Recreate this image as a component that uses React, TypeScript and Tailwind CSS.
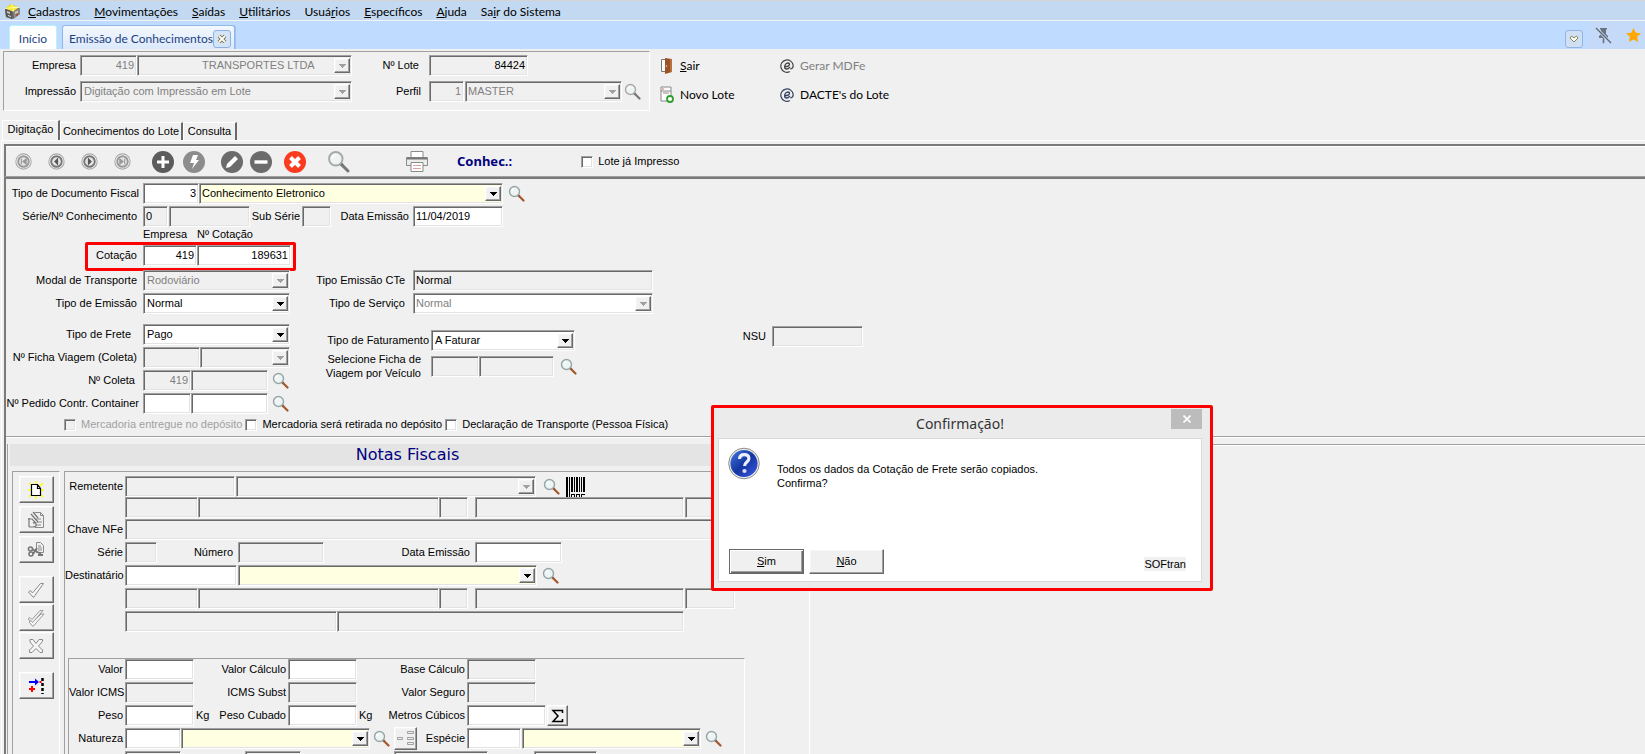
import type { ReactNode } from "react";
import clsx from "clsx";

const sunken =
  "border border-t-[#a0a0a0] border-l-[#a0a0a0] border-r-white border-b-white shadow-[inset_1px_1px_0_#696969,inset_-1px_-1px_0_#e3e3e3]";
const raised =
  "border border-t-white border-l-white border-r-[#696969] border-b-[#696969] shadow-[inset_-1px_-1px_0_#a0a0a0,inset_1px_1px_0_#f6f6f6] bg-[#f0f0f0]";
const groove = "border border-t-[#a0a0a0] border-l-[#a0a0a0] border-r-white border-b-white";

interface FieldProps {
  name: string;
  label?: string;
  value?: string;
  className: string;
  white?: boolean;
  right?: boolean;
  muted?: boolean;
}

function Field({ name, label, value = "", className, white, right, muted }: FieldProps) {
  return (
    <input
      id={name}
      name={name}
      aria-label={label}
      defaultValue={value}
      readOnly={!white}
      className={clsx(
        "h-[21px] shrink-0 px-[2px] pb-[2px] outline-none",
        sunken,
        white ? "bg-white" : "bg-[#f0f0f0]",
        right && "text-right",
        muted ? "text-[#808080]" : "text-black",
        className,
      )}
    />
  );
}

interface ComboProps {
  name: string;
  label?: string;
  value?: string;
  className: string;
  bg?: string;
  disabled?: boolean;
  indent?: string;
}

function Combo({
  name,
  label,
  value = "",
  className,
  bg = "bg-white",
  disabled,
  indent = "pl-1",
}: ComboProps) {
  return (
    <div className={clsx("flex h-[21px] shrink-0 p-[2px] pr-[1px]", sunken, bg, className)}>
      <select
        id={name}
        name={name}
        aria-label={label}
        disabled={disabled}
        className={clsx(
          "min-w-0 flex-1 appearance-none bg-transparent pb-px leading-none opacity-100 outline-none",
          indent,
          disabled ? "text-[#808080]" : "text-black",
        )}
      >
        <option>{value}</option>
      </select>
      <span className={clsx("flex w-4 items-center justify-center", raised)}>
        <svg width="7" height="4" viewBox="0 0 7 4" shapeRendering="crispEdges">
          <path d="M0 0h7v1H0zM1 1h5v1H1zM2 2h3v1H2zM3 3h1v1H3z" fill={disabled ? "#a0a0a0" : "#000"} />
        </svg>
      </span>
    </div>
  );
}

function Label({ to, className, children }: { to: string; className?: string; children: ReactNode }) {
  return (
    <label htmlFor={to} className={clsx("shrink-0 whitespace-nowrap text-right", className)}>
      {children}
    </label>
  );
}

function Check({ name, disabled, className, children }: { name: string; disabled?: boolean; className?: string; children: ReactNode }) {
  return (
    <label className={clsx("flex items-center gap-[5px] whitespace-nowrap", disabled && "text-[#a0a0a0]", className)}>
      <input
        type="checkbox"
        name={name}
        disabled={disabled}
        className={clsx("size-3 appearance-none", sunken, disabled ? "bg-[#f0f0f0]" : "bg-white")}
      />
      {children}
    </label>
  );
}

function Lens({ gray, size = 17 }: { gray?: boolean; size?: number }) {
  return (
    <svg width={size} height={size} viewBox="0 0 17 17" fill="none">
      <path d="M10 10l1.500 1.500" stroke="#444" strokeWidth="2.200" />
      <path d="M11 11l4.500 4.500" stroke={gray ? "#777" : "#a4562c"} strokeWidth="2.200" strokeLinecap="round" />
      <circle cx="6.500" cy="6.500" r="5" fill="#eef4f4" stroke={gray ? "#a8a8a8" : "#94a6a6"} strokeWidth="1.400" />
      <path d="M3.800 6.200a3 3 0 0 1 2.400-2.500" stroke="#fff" strokeWidth="1.200" />
    </svg>
  );
}

function SearchButton({ label, gray, className }: { label: string; gray?: boolean; className?: string }) {
  return (
    <button type="button" aria-label={label} className={clsx("shrink-0", className)}>
      <Lens gray={gray} />
    </button>
  );
}

const menus = [
  ["", "C", "adastros"],
  ["", "M", "ovimentações"],
  ["", "S", "aídas"],
  ["", "U", "tilitários"],
  ["Usuá", "r", "ios"],
  ["", "E", "specíficos"],
  ["", "A", "juda"],
  ["Sa", "i", "r do Sistema"],
];

function MenuBar() {
  return (
    <nav className="flex h-[21px] items-center border-t border-b border-t-[#d4d4d4] border-b-[#f4f4f4] bg-[#c3d9f1] pt-px pl-1 font-[Lato] text-[12px]">
      <svg width="17" height="17" viewBox="0 0 17 17">
        <path d="M7 1l8 4 1 6-7 5-7-2-1-8z" fill="#6a6664" />
        <path d="M1 5.500l7 3v7.500l-6-2z" fill="#5a5856" />
        <path d="M9 8.500l7-3.500v6l-6 4.500z" fill="#8d8682" />
        <path d="M7 1l8 3.500-6 4-8-3z" fill="#f5e92a" />
        <path d="M7 1l3 3.500-1 4M1 5.500l9-1 5 0" stroke="#fffbc0" strokeWidth=".8" fill="none" />
        <path d="M3 8l3 1v2l-3-1z" fill="#c9c4c0" />
        <path d="M4 12l3 1v1l-3-1z" fill="#ece8e4" />
        <path d="M11 9l3-1.500v2L11 11z" fill="#d8c9c0" />
        <path d="M12 11.500l2-1v1.500l-2 1z" fill="#a8402c" />
      </svg>
      <div className="ml-[7px] flex gap-[14px]">
        {menus.map(([before, key, after]) => (
          <button key={before + key + after} type="button" className="whitespace-nowrap">
            {before}
            <span className="underline">{key}</span>
            {after}
          </button>
        ))}
      </div>
    </nav>
  );
}

function WindowTabs() {
  return (
    <div className="flex h-7 items-end bg-[#bfdbff] font-[Lato] text-[12px] text-[#1f3f80]">
      <button type="button" className="ml-[9px] h-6 w-12 rounded-t-[3px] border border-b-0 border-[#b8f2fb] bg-white pt-[2px]">
        Início
      </button>
      <div className="ml-[5px] flex h-6 w-[173px] items-center justify-between rounded-t-[3px] border border-b-0 border-[#8db8e8] bg-linear-to-b from-[#f4f8ff] to-[#dbe9fb] pt-[2px] pr-[3px] pl-[6px] shadow-[1px_0_0_#9fc4ee]">
        <button type="button" className="whitespace-nowrap">Emissão de Conhecimentos</button>
        <button
          type="button"
          aria-label="Fechar aba"
          className="flex size-[18px] shrink-0 items-center justify-center rounded-[3px] border border-[#8fb0e0] bg-[#d3e3f8]"
        >
          <svg width="10" height="10" viewBox="0 0 10 10">
            <path d="M2 2l6 6M8 2l-6 6" stroke="#6f6b34" strokeWidth="3.600" />
            <path d="M2 2l6 6M8 2l-6 6" stroke="#fff" strokeWidth="1.800" />
          </svg>
        </button>
      </div>
      <div className="flex-1" />
      <button
        type="button"
        aria-label="Listar abas"
        className="mr-[6px] mb-px flex size-[18px] items-center justify-center rounded-[3px] border border-[#94b4e4] bg-[#d0e0f4]"
      >
        <svg width="10" height="8" viewBox="0 0 10 8">
          <path d="M1 3l1.500-2L5 3l2.500-2L9 3 5 7z" fill="#fff" stroke="#8a8650" />
        </svg>
      </button>
      <div className="flex h-full w-14 items-center gap-[14px] bg-[#c4daf8] pl-[6px]">
        <button type="button" aria-label="Desafixar">
          <svg width="17" height="17" viewBox="0 0 17 17">
            <path d="M5 1h7v1l-1 1v4l2 2v2H4V9l2-2V3L5 2z" fill="#6b7280" />
            <path d="M8 11h1v5H8z" stroke="#8c95a4" />
            <path d="M1 1l15 15" stroke="#c4daf8" strokeWidth="3" />
            <path d="M1 1l15 15" stroke="#5d6470" strokeWidth="1.300" />
          </svg>
        </button>
        <button type="button" aria-label="Favorito">
          <svg width="15" height="14" viewBox="0 0 15 14">
            <path d="M7.500 0l2.200 4.700 5.300.6-3.900 3.500 1 5.200-4.600-2.600L2.900 14l1-5.200L0 5.300l5.300-.6z" fill="#ffa800" />
          </svg>
        </button>
      </div>
    </div>
  );
}

function EmailGlyph({ color }: { color: string }) {
  return (
    <svg width="14" height="14" viewBox="0 0 14 14" fill="none" stroke={color} strokeLinecap="round">
      <path d="M9.500 12.800A6.200 6.200 0 1 1 13.200 6.500c0 2-1 3.200-2.400 3.400" strokeWidth="1.200" />
      <path d="M5 7.600c2.700 0 4.500-.8 4.500-2.300 0-.9-.6-1.300-1.500-1.300-1.900 0-3.300 2-3.300 4 0 1.200.6 2 1.800 2 1.200 0 2.300-.6 3.100-1.600" strokeWidth="1.400" />
    </svg>
  );
}

function Header() {
  return (
    <header className="flex pt-[2px] pl-[3px]">
      <div className={clsx("flex h-[60px] w-[647px] flex-col gap-[5px] pt-[3px]", groove)}>
        <div className="flex items-center">
          <Label to="empresa" className="w-[76px] pr-1">Empresa</Label>
          <Field name="empresa" value="419" right muted className="w-[57px]" />
          <Combo name="empresaNome" label="Nome da empresa" value="TRANSPORTES LTDA" disabled bg="bg-[#f0f0f0]" indent="pl-[62px]" className="w-[215px]" />
          <Label to="lote" className="w-[77px] pr-[10px]">Nº Lote</Label>
          <Field name="lote" value="84424" right className="w-[99px]" />
        </div>
        <div className="flex items-center">
          <Label to="impressao" className="w-[76px] pr-1">Impressão</Label>
          <Combo name="impressao" value="Digitação com Impressão em Lote" disabled bg="bg-[#f0f0f0]" indent="pl-px" className="w-[272px]" />
          <Label to="perfil" className="w-[77px] pr-2">Perfil</Label>
          <Field name="perfil" value="1" right muted className="w-[35px]" />
          <Combo name="perfilNome" label="Nome do perfil" value="MASTER" disabled bg="bg-[#f0f0f0]" indent="pl-0" className="ml-px w-[157px]" />
          <SearchButton label="Pesquisar perfil" gray className="ml-[2px]" />
        </div>
      </div>
      <div className="ml-[10px] grid grid-cols-[120px_auto] grid-rows-[29px_29px] font-[Lato] text-[12px]">
        <button type="button" className="flex items-center gap-[7px]">
          <svg width="13" height="16" viewBox="0 0 13 16">
            <path d="M1.500 1.500h4v12h-4z" fill="#fff" stroke="#777" />
            <path d="M5 0l7 1v13l-7 2z" fill="#9a5226" />
            <path d="M10 1h2v13h-2z" fill="#b8703d" />
            <circle cx="6.500" cy="8" r=".8" fill="#f1d9a0" />
          </svg>
          <span><span className="underline">S</span>air</span>
        </button>
        <button type="button" className="flex items-center gap-[6px] text-[#808080]">
          <EmailGlyph color="#444" />
          Gerar MDFe
        </button>
        <button type="button" className="flex items-center gap-[6px]">
          <svg width="14" height="17" viewBox="0 0 14 17">
            <path d="M1 1h10v14H1z" fill="#fff" stroke="#888" />
            <path d="M1 5h10M3 7h6" stroke="#888" />
            <path d="M2 3h2" stroke="#d66" />
            <circle cx="10" cy="13" r="3" fill="#fff" stroke="#2f9e2f" strokeWidth="1.800" />
          </svg>
          Novo Lote
        </button>
        <button type="button" className="flex items-center gap-[6px]">
          <EmailGlyph color="#33415e" />
          DACTE's do Lote
        </button>
      </div>
    </header>
  );
}

function PageTabs() {
  const edge = "border-t border-l border-r-2 border-t-white border-l-white border-r-[#696969]";
  return (
    <div className="mt-[9px] flex h-5 items-end pl-[2px]">
      <button type="button" className={clsx("h-5 w-[58px] pb-[2px]", edge)}>Digitação</button>
      <button type="button" className={clsx("h-[18px] w-[123px] whitespace-nowrap", edge)}>Conhecimentos do Lote</button>
      <button type="button" className={clsx("h-[18px] w-[54px]", edge)}>Consulta</button>
    </div>
  );
}

const navIcons = [
  { label: "Primeiro", d: "M6 5.500v5M10.500 5.500L7.500 8l3 2.500z", dark: false },
  { label: "Anterior", d: "M9 5.500L6.500 8 9 10.500z", dark: true },
  { label: "Próximo", d: "M7 5.500L9.500 8 7 10.500z", dark: true },
  { label: "Último", d: "M10 5.500v5M5.500 5.500L8.500 8l-3 2.500z", dark: false },
];

function RoundButton({ label, color, children }: { label: string; color: string; children: ReactNode }) {
  return (
    <button type="button" aria-label={label}>
      <svg width="24" height="24" viewBox="0 0 24 24">
        <circle cx="12" cy="12" r="11" fill={color} />
        {children}
      </svg>
    </button>
  );
}

function Toolbar() {
  return (
    <div className="flex h-[33px] items-center border-t-2 border-b border-l-2 border-t-[#7a7a7a] border-b-[#a0a0a0] border-l-[#7a7a7a] pt-px shadow-[inset_0_1px_0_#fff,0_1px_0_#fff]">
      <div className="ml-px flex">
        {navIcons.map((icon) => (
          <button key={icon.label} type="button" aria-label={icon.label} className="flex w-[33px] justify-center">
            <svg width="17" height="17" viewBox="0 0 16 16">
              <circle cx="8" cy="8" r="7.200" fill="#fafafa" stroke="#a8a8a8" />
              <circle cx="8" cy="8" r="5" fill="#e4e4e4" stroke={icon.dark ? "#777" : "#999"} strokeWidth="1.800" />
              <path d={icon.d} fill={icon.dark ? "#555" : "#999"} stroke={icon.dark ? "#555" : "#999"} />
            </svg>
          </button>
        ))}
      </div>
      <div className="ml-3 flex gap-[7px]">
        <RoundButton label="Incluir" color="#5c5c5c">
          <path d="M12 6v12M6 12h12" stroke="#fff" strokeWidth="3" />
        </RoundButton>
        <RoundButton label="Executar" color="#8c8c8c">
          <path d="M11 5h5l-2 5h3l-7 9 2-6H8z" fill="#fff" />
        </RoundButton>
      </div>
      <div className="ml-[14px] flex gap-[5px]">
        <RoundButton label="Alterar" color="#6b6b6b">
          <path d="M6 18l1-4 8-8 3 3-8 8z" fill="#fff" />
        </RoundButton>
        <RoundButton label="Excluir" color="#6b6b6b">
          <path d="M5.500 12h13" stroke="#fff" strokeWidth="3.400" />
        </RoundButton>
      </div>
      <div className="ml-[10px] flex">
        <RoundButton label="Cancelar" color="#fb3b20">
          <path d="M7.500 7.500l9 9M16.500 7.500l-9 9" stroke="#fff" strokeWidth="4" />
        </RoundButton>
      </div>
      <button type="button" aria-label="Pesquisar" className="ml-5">
        <Lens gray size={23} />
      </button>
      <button type="button" aria-label="Imprimir" className="ml-14">
        <svg width="22" height="21" viewBox="0 0 22 21" fill="#fff" stroke="#8a8a8a">
          <path d="M5 7V.5h12V7" />
          <path d="M.5 6.500h21v8H.5z" fill="#ececec" />
          <path d="M1 7.500h20" stroke="#777" strokeWidth="2" />
          <path d="M5 11.500h12v9H5z" />
          <path d="M7 14.500h8M7 17.500h8" stroke="#e0a0a0" />
        </svg>
      </button>
      <span className="ml-[29px] font-['Noto_Sans'] text-[13px] font-bold text-[#000080]">Conhec.:</span>
      <Check name="loteImpresso" className="ml-[69px]">Lote já Impresso</Check>
    </div>
  );
}

const labelCol = "w-[137px] pr-[6px]";

function DocumentForm() {
  return (
    <section className="h-[258px] border-b border-[#a0a0a0] pt-1">
      <div className="flex flex-col gap-[2px]">
        <div className="flex items-center">
          <Label to="tipoDoc" className="w-[137px] pr-1">Tipo de Documento Fiscal</Label>
          <Field name="tipoDoc" value="3" white right className="w-14" />
          <Combo name="tipoDocNome" label="Documento fiscal" value="Conhecimento Eletronico" bg="bg-[#ffffe1]" indent="pl-0" className="w-[304px]" />
          <SearchButton label="Pesquisar documento" className="ml-[5px]" />
        </div>
        <div className="flex items-center">
          <Label to="serie" className={labelCol}>Série/Nº Conhecimento</Label>
          <Field name="serie" value="0" className="w-[25px]" />
          <Field name="numero" label="Nº Conhecimento" className="ml-px w-[81px]" />
          <Label to="subSerie" className="w-[52px] pr-[2px]">Sub Série</Label>
          <Field name="subSerie" className="w-[29px]" />
          <Label to="dataEmissao" className="w-[82px] pr-1">Data Emissão</Label>
          <Field name="dataEmissao" value="11/04/2019" white className="w-[90px]" />
        </div>
      </div>
      <div className="flex h-[15px] items-center pl-[137px]">
        <span className="w-[54px]">Empresa</span>
        <span>Nº Cotação</span>
      </div>
      <div className="ml-[79px] flex h-[29px] w-[211px] items-center rounded-[2px] border-[3px] border-[#fe0000] pb-[2px]">
        <Label to="cotacaoEmpresa" className="w-[55px] pr-[6px]">Cotação</Label>
        <Field name="cotacaoEmpresa" value="419" white right className="w-[54px]" />
        <Field name="cotacao" label="Nº Cotação" value="189631" white right className="w-[94px]" />
      </div>
      <div className="-mt-px flex">
        <div className="flex flex-col gap-[10px]">
          <div className="flex flex-col gap-[2px]">
            <div className="flex items-center">
              <Label to="modal" className={labelCol}>Modal de Transporte</Label>
              <Combo name="modal" value="Rodoviário" disabled bg="bg-[#f0f0f0]" indent="pl-px" className="w-[147px]" />
            </div>
            <div className="flex items-center">
              <Label to="tipoEmissao" className={labelCol}>Tipo de Emissão</Label>
              <Combo name="tipoEmissao" value="Normal" indent="pl-px" className="w-[147px]" />
            </div>
          </div>
          <div className="flex flex-col gap-[2px]">
            <div className="flex items-center">
              <Label to="tipoFrete" className="w-[137px] pr-3">Tipo de Frete</Label>
              <Combo name="tipoFrete" value="Pago" indent="pl-px" className="w-[147px]" />
            </div>
            <div className="flex items-center">
              <Label to="ficha" className={labelCol}>Nº Ficha Viagem (Coleta)</Label>
              <Field name="ficha" className="w-[57px]" />
              <Combo name="fichaColeta" label="Coleta" disabled bg="bg-[#f0f0f0]" className="w-[90px]" />
            </div>
            <div className="flex items-center">
              <Label to="coleta" className="w-[137px] pr-2">Nº Coleta</Label>
              <Field name="coleta" value="419" right muted className="w-12" />
              <Field name="coletaNumero" label="Número da coleta" className="w-[77px]" />
              <SearchButton label="Pesquisar coleta" className="ml-1" />
            </div>
            <div className="flex items-center">
              <Label to="pedido" className="w-[137px] pr-1">Nº Pedido Contr. Container</Label>
              <Field name="pedido" white className="w-12" />
              <Field name="container" label="Container" white className="w-[77px]" />
              <SearchButton label="Pesquisar container" className="ml-1" />
            </div>
          </div>
        </div>
        <div className="flex flex-col gap-4">
          <div className="flex flex-col gap-[2px]">
            <div className="flex items-center">
              <Label to="emissaoCte" className="w-[123px] pr-2">Tipo Emissão CTe</Label>
              <Field name="emissaoCte" value="Normal" className="w-[240px]" />
            </div>
            <div className="flex items-center">
              <Label to="servico" className="w-[123px] pr-2">Tipo de Serviço</Label>
              <Combo name="servico" value="Normal" disabled indent="pl-0" className="w-[240px]" />
            </div>
          </div>
          <div className="flex flex-col gap-px">
            <div className="flex items-center">
              <Label to="faturamento" className="w-[141px] pr-[2px]">Tipo de Faturamento</Label>
              <Combo name="faturamento" value="A Faturar" indent="pl-px" className="w-36" />
            </div>
            <div className="flex items-center">
              <Label to="fichaVeiculo" className="w-[141px] pr-[10px] leading-[14px]">
                Selecione Ficha de
                <br />
                Viagem por Veículo
              </Label>
              <Field name="fichaVeiculo" className="w-12" />
              <Field name="veiculo" label="Veículo" className="w-[75px]" />
              <SearchButton label="Pesquisar veículo" className="ml-[6px]" />
            </div>
          </div>
        </div>
        <div className="mt-14 flex h-[21px] items-center">
          <Label to="nsu" className="w-[119px] pr-[6px]">NSU</Label>
          <Field name="nsu" className="w-[91px]" />
        </div>
      </div>
      <div className="mt-1 flex gap-[3px] pl-[58px]">
        <Check name="entregue" disabled>Mercadoria entregue no depósito</Check>
        <Check name="retirada">Mercadoria será retirada no depósito</Check>
        <Check name="declaracao">Declaração de Transporte (Pessoa Física)</Check>
      </div>
    </section>
  );
}

function SideButton({ label, children }: { label: string; children: ReactNode }) {
  return (
    <button type="button" aria-label={label} className={clsx("flex h-[27px] w-[35px] items-center justify-center", raised)}>
      <svg width="18" height="18" viewBox="0 0 18 18" fill="none">
        {children}
      </svg>
    </button>
  );
}

function SideBar() {
  return (
    <div className={clsx("flex w-12 flex-col items-center gap-[13px] border-b-0 pt-1", groove)}>
      <div className="flex flex-col gap-[3px]">
        <SideButton label="Novo">
          <path d="M2 2l3 3M16 2l-3 3M2 16l3-3M16 16l-3-3M1 9h3M14 9h3M9 0v3M9 15v3" stroke="#ff0" strokeWidth="1.500" />
          <path d="M4.500 3.500h6l3 4v7h-9zM10.500 3.500v4h3" fill="#fff" stroke="#000" strokeWidth="1.200" />
        </SideButton>
        <SideButton label="Editar">
          <path d="M7.500 1.500h6l3 3v12h-9M13.500 1.500v3h3M9 8h5M10 11h5M9 14h5" stroke="#8a8a8a" />
          <path d="M4 3l7 8M6 1l5 6M2 7v9M1 8h4l3 3-2 1h3v3l-3 1H2" stroke="#777" strokeWidth="1.200" />
        </SideButton>
        <SideButton label="Recortar">
          <path d="M9.500 1.500h4l3 3v7h-7zM11 5h3M11 7h4M11 9h4" stroke="#8a8a8a" />
          <circle cx="3.500" cy="8" r="2" stroke="#777" strokeWidth="1.600" />
          <circle cx="4" cy="13" r="2" stroke="#777" strokeWidth="1.600" />
          <path d="M5 8l9 5M6 13l4-6M11 14h5" stroke="#777" strokeWidth="2" />
        </SideButton>
      </div>
      <div className="flex flex-col gap-px">
        <SideButton label="Confirmar">
          <path d="M1.500 11l2-1.500 2 2.500 8-9.500h3L6.500 16.500z" fill="#f6f6f6" stroke="#8a8a8a" />
        </SideButton>
        <SideButton label="Confirmar todos">
          <path d="M1 10l2-1.500 2 2 8-9h3L5.500 14z" stroke="#9a9a9a" />
          <path d="M2 13l2-1.500 1.500 2L14 5h3L6 17.500z" fill="#f6f6f6" stroke="#9a9a9a" />
        </SideButton>
        <SideButton label="Cancelar nota">
          <path d="M3 2.500h3l3 4 3-4h3.500v2L11.500 9l4 4v2.500H13l-4-4-4 4H2.500V13L6.500 9 3 5z" fill="#f6f6f6" stroke="#8a8a8a" />
        </SideButton>
      </div>
      <SideButton label="Inserir item">
        <path d="M2 5h8" stroke="#00f" strokeWidth="2" />
        <path d="M8 1.500L12 5 8 8.500z" fill="#00f" />
        <path d="M2 12h6M5 9v6" stroke="#f00" strokeWidth="2" />
        <path d="M12.500 5h2" stroke="#f00" strokeWidth="2" />
        <path d="M15.500 1v16" stroke="#000" strokeWidth="2.500" strokeDasharray="3 2" />
      </SideButton>
    </div>
  );
}

const notaLabel = "w-[60px] pr-[2px]";

function NotaForm() {
  return (
    <div className="ml-1 flex min-w-0 flex-1 flex-col border-t border-l border-[#a0a0a0] pt-1">
      <div className="relative z-10 flex h-[21px] items-center">
        <Label to="remetente" className={notaLabel}>Remetente</Label>
        <Field name="remetente" className="w-[110px]" />
        <Combo name="remetenteNome" label="Nome do remetente" disabled bg="bg-[#f0f0f0]" className="ml-px w-[300px]" />
        <SearchButton label="Pesquisar remetente" className="ml-[7px]" />
        <button type="button" aria-label="Código de barras" className="ml-[6px]">
          <svg width="19" height="20" viewBox="0 0 19 20" shapeRendering="crispEdges">
            <path d="M0 0h2v20H0zM3 0h1v20H3zM5 0h2v15H5zM8 0h1v15H8zM10 0h2v15h-2zM13 0h1v15h-1zM15 0h1v15h-1zM17 0h2v15h-2z" fill="#000" />
            <path d="M5.500 20v-3h3v3M10.500 20v-3h3v3M15.500 20v-3h3" fill="none" stroke="#000" />
          </svg>
        </button>
      </div>
      <div className="flex pl-[60px]">
        <Field name="remCidade" label="Cidade do remetente" className="w-[73px]" />
        <Field name="remMunicipio" label="Município do remetente" className="w-[241px]" />
        <Field name="remUf" label="UF do remetente" className="w-[29px]" />
        <Field name="remEndereco" label="Endereço do remetente" className="ml-[7px] w-[209px]" />
        <Field name="remCep" label="CEP do remetente" className="ml-px w-[50px]" />
      </div>
      <div className="mt-px flex flex-col gap-[2px]">
        <div className="flex items-center">
          <Label to="chave" className={notaLabel}>Chave NFe</Label>
          <Field name="chave" className="w-[610px]" />
        </div>
        <div className="flex items-center">
          <Label to="serieNf" className={notaLabel}>Série</Label>
          <Field name="serieNf" className="w-8" />
          <Label to="numeroNf" className="w-[81px] pr-[5px]">Número</Label>
          <Field name="numeroNf" className="w-[86px]" />
          <Label to="dataNf" className="w-[151px] pr-[5px]">Data Emissão</Label>
          <Field name="dataNf" white className="w-[87px]" />
        </div>
        <div className="flex items-center">
          <Label to="destinatario" className={notaLabel}>Destinatário</Label>
          <Field name="destinatario" white className="w-[112px]" />
          <Combo name="destinatarioNome" label="Nome do destinatário" bg="bg-[#ffffe1]" className="ml-px w-[299px]" />
          <SearchButton label="Pesquisar destinatário" className="ml-[5px]" />
        </div>
        <div className="flex pl-[60px]">
          <Field name="destCidade" label="Cidade do destinatário" className="w-[73px]" />
          <Field name="destMunicipio" label="Município do destinatário" className="w-[241px]" />
          <Field name="destUf" label="UF do destinatário" className="w-[29px]" />
          <Field name="destEndereco" label="Endereço do destinatário" className="ml-[7px] w-[209px]" />
          <Field name="destCep" label="CEP do destinatário" className="ml-px w-[50px]" />
        </div>
        <div className="flex pl-[60px]">
          <Field name="destBairro" label="Bairro do destinatário" className="w-[212px]" />
          <Field name="destComplemento" label="Complemento" className="w-[347px]" />
        </div>
      </div>
      <Valores />
    </div>
  );
}

const valCol1 = "w-[56px] pr-[2px]";
const valCol2 = "w-[94px] pr-[2px]";
const valCol3 = "w-[110px] pr-[2px]";

function Valores() {
  return (
    <div className={clsx("mt-[26px] ml-[3px] flex w-[677px] flex-col gap-[2px] border-b-0", groove)}>
      <div className="flex items-center">
        <Label to="valor" className={valCol1}>Valor</Label>
        <Field name="valor" white className="w-[69px]" />
        <Label to="valorCalculo" className={valCol2}>Valor Cálculo</Label>
        <Field name="valorCalculo" white className="w-[69px]" />
        <Label to="baseCalculo" className={valCol3}>Base Cálculo</Label>
        <Field name="baseCalculo" className="w-[69px]" />
      </div>
      <div className="flex items-center">
        <Label to="valorIcms" className={valCol1}>Valor ICMS</Label>
        <Field name="valorIcms" className="w-[69px]" />
        <Label to="icmsSubst" className={valCol2}>ICMS Subst</Label>
        <Field name="icmsSubst" className="w-[69px]" />
        <Label to="valorSeguro" className={valCol3}>Valor Seguro</Label>
        <Field name="valorSeguro" className="w-[69px]" />
      </div>
      <div className="flex items-center">
        <Label to="peso" className={valCol1}>Peso</Label>
        <Field name="peso" white className="w-[69px]" />
        <span className="w-4 pl-[2px]">Kg</span>
        <Label to="pesoCubado" className="w-[78px] pr-[2px]">Peso Cubado</Label>
        <Field name="pesoCubado" white className="w-[69px]" />
        <span className="w-4 pl-[2px]">Kg</span>
        <Label to="metros" className="w-[94px] pr-[2px]">Metros Cúbicos</Label>
        <Field name="metros" white className="w-[79px]" />
        <button type="button" aria-label="Somar" className={clsx("ml-px flex h-[21px] w-[21px] items-center justify-center", raised)}>
          <svg width="13" height="14" viewBox="0 0 13 14">
            <path d="M11.500 4V1.500H2L7 7l-5 5.500h9.500V10" fill="none" stroke="#000" strokeWidth="1.500" />
          </svg>
        </button>
      </div>
      <div className="flex h-[21px] items-center">
        <Label to="natureza" className={valCol1}>Natureza</Label>
        <Field name="natureza" white className="w-14" />
        <Combo name="naturezaNome" label="Nome da natureza" bg="bg-[#ffffe1]" className="w-[189px]" />
        <SearchButton label="Pesquisar natureza" className="ml-[3px]" />
        <button type="button" aria-label="Árvore" className={clsx("ml-1 flex size-[23px] items-center justify-center", raised)}>
          <svg width="18" height="15" viewBox="0 0 18 15" fill="none" stroke="#a0a0a0">
            <path d="M.5 6.500h5v2h-5zM10.500.5h6v2h-6zM10.500 6.500h6v2h-6zM10.500 11.500h6v2h-6z" />
          </svg>
        </button>
        <Label to="especie" className="w-[50px] pr-[2px]">Espécie</Label>
        <Field name="especie" white className="w-[54px]" />
        <Combo name="especieNome" label="Nome da espécie" bg="bg-[#ffffe1]" className="ml-px w-[179px]" />
        <SearchButton label="Pesquisar espécie" className="ml-1" />
      </div>
      <div className="flex pl-14">
        <Field name="extra1" label="Quantidade" className="w-14" />
        <Field name="extra2" label="Volumes" className="ml-16 w-14" />
        <Field name="extra3" label="Marca" className="ml-[93px] w-[94px]" />
        <Field name="extra4" label="Cubagem" className="ml-[46px] w-[63px]" />
      </div>
    </div>
  );
}

function NotasFiscais() {
  return (
    <section className="flex pt-[7px] shadow-[inset_0_1px_0_#fff]">
      <div className="ml-px w-[803px] shrink-0 border-r border-l border-r-white border-l-[#a0a0a0]">
        <h2 className="ml-[2px] h-[22px] bg-[#e4e4e4] pr-1 text-center font-['DejaVu_Sans'] text-[16px] leading-[22px] text-[#000080]">
          Notas Fiscais
        </h2>
        <div className="mt-[5px] flex h-[320px] pl-1">
          <SideBar />
          <NotaForm />
        </div>
      </div>
      <div className="flex-1 border-t border-[#a0a0a0] shadow-[inset_0_1px_0_#fff]" />
    </section>
  );
}

function ConfirmDialog() {
  const action = "flex h-[25px] w-[75px] items-center justify-center";
  return (
    <div
      role="dialog"
      aria-labelledby="confirmTitle"
      className="absolute top-[405px] left-[711px] z-20 w-[502px] rounded-[2px] border-[3px] border-[#fe0000] bg-[#ebebeb]"
    >
      <div className="relative h-[30px]">
        <h3 id="confirmTitle" className="pr-1 text-center font-['Noto_Sans'] text-[14px] leading-8 text-[#333]">Confirmação!</h3>
        <button type="button" aria-label="Fechar" className="absolute top-px right-2 flex h-5 w-[31px] items-center justify-center bg-[#bcbcbc]">
          <svg width="8" height="8" viewBox="0 0 8 8">
            <path d="M.5.5l7 7M7.500.5l-7 7" stroke="#fff" strokeWidth="1.600" />
          </svg>
        </button>
      </div>
      <div className="mr-2 mb-[6px] ml-1 flex h-36 flex-col justify-between border border-[#dadada] bg-white pt-2 pr-[15px] pb-[7px] pl-[9px]">
        <div className="flex gap-[17px]">
          <svg width="32" height="33" viewBox="0 0 32 33">
            <defs>
              <linearGradient id="helpFill" x1="0" y1="0" x2="1" y2="1">
                <stop offset="0" stopColor="#4a78e0" />
                <stop offset=".5" stopColor="#1236a0" />
                <stop offset="1" stopColor="#3f58e8" />
              </linearGradient>
            </defs>
            <circle cx="16" cy="16.500" r="15.300" fill="#eee" stroke="#8c8c8c" />
            <circle cx="16" cy="16.500" r="13.600" fill="url(#helpFill)" />
            <path d="M11.500 12c.2-3 2-4.300 4.700-4.300 2.800 0 4.700 1.500 4.700 3.900 0 3.600-4.300 3.400-4.300 7.400" fill="none" stroke="#eef" strokeWidth="3.200" />
            <circle cx="16.500" cy="24" r="2.100" fill="#dde" />
          </svg>
          <p className="pt-[15px] leading-[14px]">
            Todos os dados da Cotação de Frete serão copiados.
            <br />
            Confirma?
          </p>
        </div>
        <div className="flex items-end gap-[5px] pl-px">
          <button type="button" className={clsx(action, "border border-[#696969] bg-[#f0f0f0] shadow-[inset_1px_1px_0_#fff,inset_-1px_-1px_0_#696969,inset_-2px_-2px_0_#a0a0a0]")}>
            <span className="underline">S</span>im
          </button>
          <button type="button" className={clsx(action, raised)}>
            <span className="underline">N</span>ão
          </button>
          <span className="mb-[3px] ml-auto bg-[#f0f0f0] leading-[14px]">SOFtran</span>
        </div>
      </div>
    </div>
  );
}

export default function App() {
  return (
    <div className="relative h-screen w-full overflow-hidden bg-[#f0f0f0] font-['Liberation_Sans',sans-serif] text-[11px] leading-[13px] text-black">
      <MenuBar />
      <WindowTabs />
      <Header />
      <PageTabs />
      <main className="ml-px border-t border-l border-white pt-[3px] pl-[2px]">
        <Toolbar />
        <div className="border-t-2 border-l-2 border-[#7a7a7a]">
          <DocumentForm />
          <NotasFiscais />
        </div>
      </main>
      <ConfirmDialog />
    </div>
  );
}
